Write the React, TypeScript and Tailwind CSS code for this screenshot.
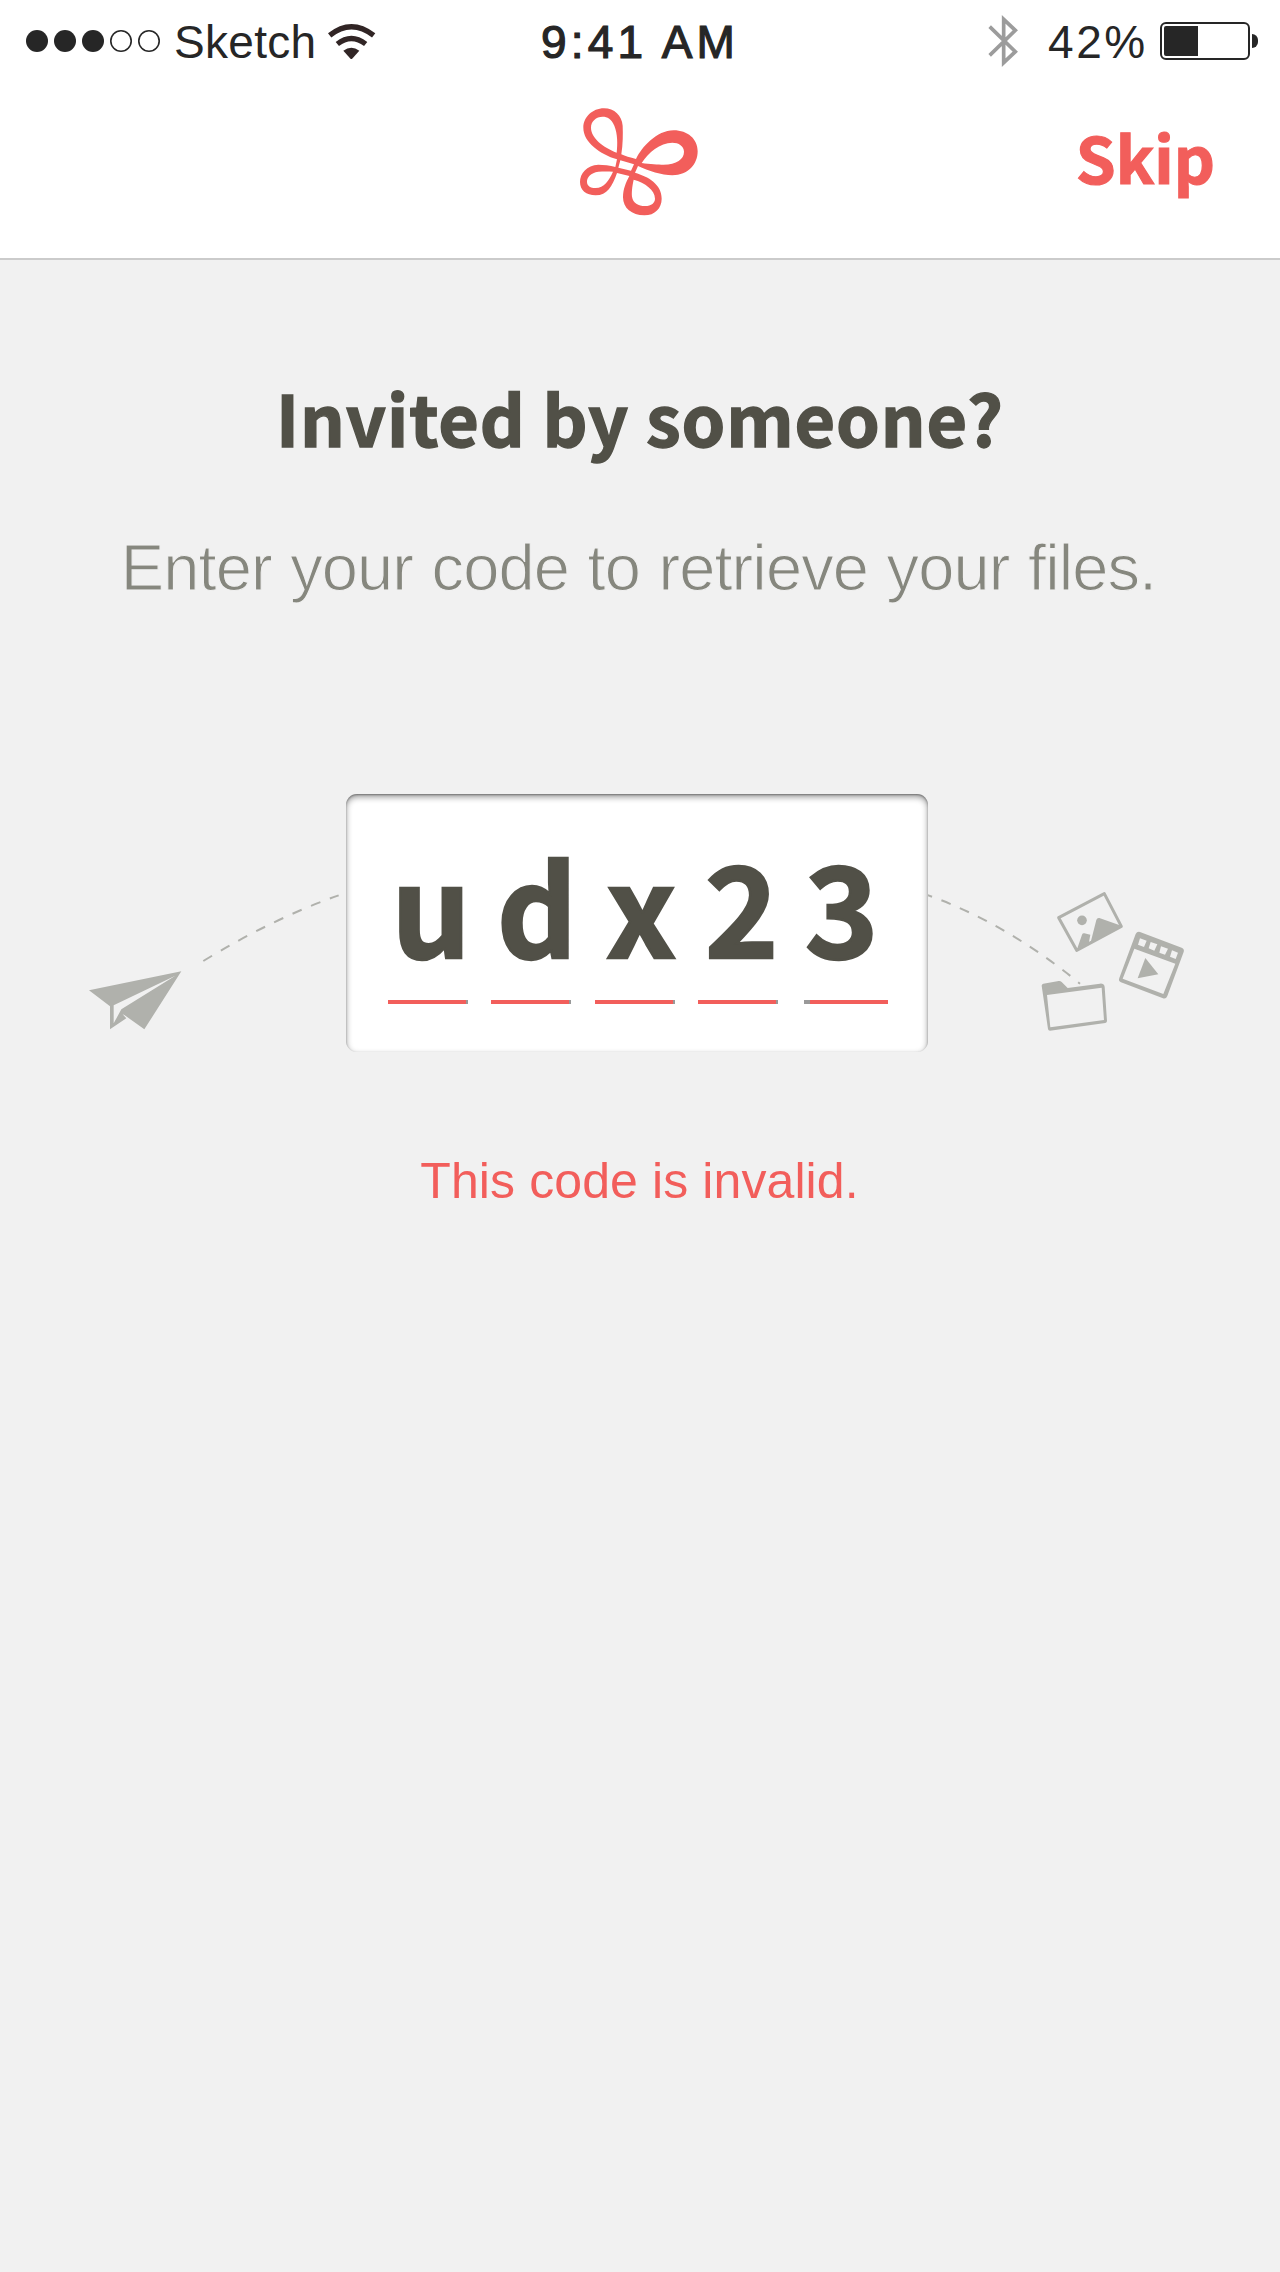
import React from 'react';

const SANS = "font-['Liberation_Sans',Arial,sans-serif]";
const DISPLAY = "font-['Noto_Sans_CJK_SC',sans-serif]";

function SignalDots() {
  return (
    <div className="flex gap-[6px]">
      {[true, true, true, false, false].map((filled, i) => (
        <span
          key={i}
          className={
            filled
              ? 'size-[22px] rounded-full bg-[#262626]'
              : 'size-[22px] rounded-full shadow-[inset_0_0_0_1.6px_#262626]'
          }
        />
      ))}
    </div>
  );
}

function WifiIcon() {
  return (
    <svg className="h-[36px] w-[48px]" viewBox="986 64 144 108" fill="none">
      <path d="M991 101Q1056 49 1123 101" stroke="#312525" strokeWidth="16" />
      <path d="M1014 127Q1056 94 1099 127" stroke="#312525" strokeWidth="16" />
      <path d="M1032 147Q1056 129 1080 147L1056 174Z" fill="#312525" />
    </svg>
  );
}

function BluetoothIcon() {
  return (
    <svg className="h-[52px] w-[30px]" viewBox="84 42 90 156" fill="none">
      <path
        d="M89 77L166 152L131 185V55L166 88L89 163"
        stroke="#9c9c9c"
        strokeWidth="11"
      />
    </svg>
  );
}

function Battery() {
  return (
    <div className="flex items-center gap-[2px]">
      <div className="h-[38px] w-[90px] rounded-[6px] border-2 border-[#262626] p-[2px]">
        <div className="h-full w-[34px] rounded-l-[2px] bg-[#262626]" />
      </div>
      <div className="h-[14px] w-[6px] rounded-r-full bg-[#262626]" />
    </div>
  );
}

function Logo() {
  return (
    <svg className="h-[108px] w-[118px]" viewBox="180 323 354 322">
      <path
        fill="#f25e5b"
        fillRule="evenodd"
        d="M304 461C309 430 309 400 308 375C306 345 283 323 252 323C217 323 190 350 190 381C190 425 240 460 291 476L286 499C270 494 250 492 235 492C200 494 180 518 180 544C180 568 198 584 227 584C262 584 276 558 291 517L328 526C318 545 309 565 309 590C309 622 335 644 373 644C405 644 425 622 425 594C425 550 385 528 345 516L354 496C385 510 425 524 457 524C505 524 533 490 533 452C533 415 503 389 461 389C410 389 365 440 348 475C330 471 315 466 304 461Z
        M290 456C293 430 293 400 283 375C275 355 262 348 248 348C228 348 213 362 213 381C213 412 250 440 290 456Z
        M301 479L342 491L333 510L295 501Z
        M279 513C265 512 250 512 235 513C212 516 201 530 201 543C201 555 211 562 227 562C252 562 267 540 279 513Z
        M341 537C336 560 335 575 336 588C339 607 355 616 375 616C395 616 405 606 405 594C405 568 375 546 341 537Z
        M365 487C390 491 415 492 430 492C470 492 492 475 492 453C492 436 476 426 457 426C420 427 385 455 365 487Z"
      />
    </svg>
  );
}

function PaperPlane() {
  return (
    <svg className="h-[258px] w-[346px] shrink-0" viewBox="0 0 346 258">
      <g transform="translate(70 66) scale(.33333)">
        <path
          fill="#b0b1ac"
          d="M57 391L334 334L223 508L163 465L158 463L169 475L120 508V439ZM131 436V490L154 448L316 347Z"
          fillRule="evenodd"
        />
        <path
          d="M400 303Q610 175 806 106"
          fill="none"
          stroke="#b0b1ac"
          strokeWidth="6"
          strokeDasharray="30 30.5"
        />
      </g>
    </svg>
  );
}

function MediaFiles() {
  return (
    <svg className="h-[258px] w-[352px] shrink-0" viewBox="0 0 352 258">
      <g transform="translate(-18 66) scale(.33333)" fill="#b0b1ac">
        <path
          d="M38 100Q282 184 510 371"
          fill="none"
          stroke="#b0b1ac"
          strokeWidth="6"
          strokeDasharray="30 30"
        />
        <path
          d="M446 173L583 101L634 199L500 271Z"
          fill="none"
          stroke="#b0b1ac"
          strokeWidth="9"
          strokeLinejoin="round"
        />
        <circle cx="516" cy="181" r="14.5" />
        <path d="M500 271L516 224Q518 219 523 220L541 224L537 246L543 243L559 180Q561 173 568 174L636 198Z" />
        <path
          fillRule="evenodd"
          d="M677 222Q681 214 690 216L815 263Q824 267 821 276L772 408Q768 418 759 415L633 367Q624 363 628 354ZM673 266L638 356L760 402L796 311ZM690 235L684 254L702 261L710 242ZM722 246L716 265L733 272L742 253ZM753 259L748 278L765 284L774 266ZM786 271L780 290L797 297L804 278Z"
        />
        <path d="M706 294L745 343L683 355Z" />
        <path
          fillRule="evenodd"
          d="M395 377Q395 372 400 371L446 363Q451 362 455 366L473 384L570 371Q575 370 580 373Q584 376 584 381L591 483Q591 488 586 489L420 512Q415 512 414 507ZM411 405L421 502L582 480L575 383Z"
        />
      </g>
    </svg>
  );
}

const CODE = [
  { char: 'u', cell: 'w-[80px]', glyph: 'ml-[6px]', line: 'border-r-2' },
  { char: 'd', cell: 'w-[80px] ml-[23px]', glyph: 'ml-[12px]', line: 'border-r-2' },
  { char: 'x', cell: 'w-[80px] ml-[24px]', glyph: 'ml-[12px]', line: 'border-r-2' },
  { char: '2', cell: 'w-[80px] ml-[23px]', glyph: 'ml-[7px]', line: 'border-r-2' },
  { char: '3', cell: 'w-[84px] ml-[26px]', glyph: 'mr-[9px]', line: 'border-l-[6px]' },
];

function CodeField() {
  return (
    <div className="flex h-[258px] w-[582px] shrink-0 rounded-[11px] bg-white pl-[42px] shadow-[inset_0_3px_6px_rgba(0,0,0,0.4),inset_0_1px_2px_rgba(0,0,0,0.35)]">
      {CODE.map(({ char, cell, glyph, line }) => (
        <div key={char} className={`flex flex-col items-center ${cell}`}>
          <span
            className={`${DISPLAY} ${glyph} mt-[34px] h-[172px] text-[125px] leading-[152px] font-bold text-[#515047] [-webkit-text-stroke:2.4px_#515047]`}
          >
            {char}
          </span>
          <span className={`h-[4px] w-full border-[#999] bg-[#f25e5b] ${line}`} />
        </div>
      ))}
    </div>
  );
}

export default function App() {
  return (
    <div className={`${SANS} flex h-[2272px] w-[1280px] flex-col overflow-hidden bg-[#f1f1f1]`}>
      <header className="h-[260px] border-b-2 border-[#cbcbcb] bg-white">
        <div className="grid h-[82px] grid-cols-[1fr_auto_1fr] items-center text-[46px] leading-[52px] text-[#262626]">
          <div className="flex items-center pl-[26px]">
            <SignalDots />
            <span className="mt-[2px] ml-[14px] w-[139px] tracking-[0.3px] whitespace-nowrap">Sketch</span>
            <span className="ml-[15px]"><WifiIcon /></span>
          </div>
          <span className="mt-[2px] tracking-[4.2px] whitespace-nowrap [-webkit-text-stroke:1.2px_#262626]">9:41 AM</span>
          <div className="flex items-center justify-end pr-[22px]">
            <BluetoothIcon />
            <span className="mt-[2px] ml-[30px] w-[98px] tracking-[2.6px] whitespace-nowrap">42%</span>
            <span className="ml-[14px]"><Battery /></span>
          </div>
        </div>
        <div className="grid grid-cols-3 items-start pt-[25px]">
          <span />
          <div className="flex justify-center pt-px pr-[2px]"><Logo /></div>
          <button className={`${DISPLAY} justify-self-end pr-[65px] text-[64px] leading-[98px] font-bold text-[#f25e5b] [-webkit-text-stroke:1.2px_#f25e5b]`}>
            Skip
          </button>
        </div>
      </header>

      <main className="flex flex-col items-center">
        <h1 className={`${DISPLAY} mt-[107px] h-[107px] text-[70px] leading-[100px] font-bold tracking-[0.9px] whitespace-nowrap text-[#515047] [-webkit-text-stroke:1.4px_#515047]`}>
          Invited by someone?
        </h1>
        <p className="mt-[56px] h-[76px] pr-[3px] text-[65px] leading-[76px] tracking-[-0.9px] [word-spacing:1.4px] whitespace-nowrap text-[#86877e] [-webkit-text-stroke:1.1px_#f1f1f1]">
          Enter your code to retrieve your files.
        </p>
        <div className="mt-[188px] flex">
          <PaperPlane />
          <CodeField />
          <MediaFiles />
        </div>
        <p className="mt-[100px] h-[58px] pr-px text-[50px] leading-[58px] tracking-[0.1px] whitespace-nowrap text-[#f25e5b]">
          This code is invalid.
        </p>
      </main>
    </div>
  );
}
